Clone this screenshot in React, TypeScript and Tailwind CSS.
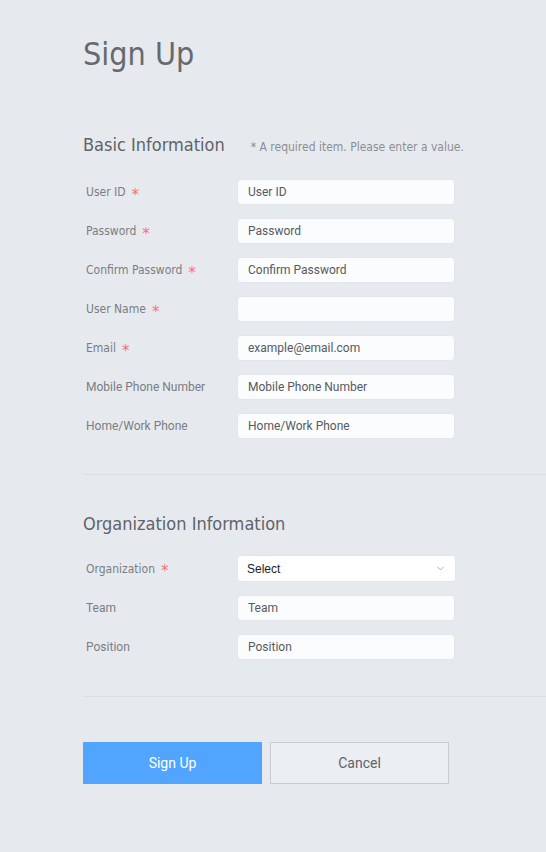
import { ChevronDown } from 'lucide-react';

const TAHOMA = 'font-["DejaVu_Sans_Condensed","DejaVu_Sans",sans-serif]';

type Field = {
  label: string;
  placeholder: string;
  required?: boolean;
  roboto?: boolean;
};

const basicFields: Field[] = [
  { label: 'User ID', placeholder: 'User ID', required: true },
  { label: 'Password', placeholder: 'Password', required: true },
  { label: 'Confirm Password', placeholder: 'Confirm Password', required: true },
  { label: 'User Name', placeholder: '', required: true },
  { label: 'Email', placeholder: 'example@email.com', required: true },
  { label: 'Mobile Phone Number', placeholder: 'Mobile Phone Number', roboto: true },
  { label: 'Home/Work Phone', placeholder: 'Home/Work Phone', roboto: true },
];

function Label({ text, required, roboto }: { text: string; required?: boolean; roboto?: boolean }) {
  return (
    <div
      className={
        'w-[154px] shrink-0 pl-[3px] text-[12px] text-[#7a7d82] flex items-center ' +
        (roboto ? 'font-["Roboto",sans-serif]' : TAHOMA)
      }
    >
      <span>{text}</span>
      {required && (
        <span className="ml-[6px] text-[#f4727a] text-[15px] leading-none translate-y-[3px] font-['DejaVu_Sans',sans-serif]">
          *
        </span>
      )}
    </div>
  );
}

function TextRow({ field }: { field: Field }) {
  return (
    <div className="flex items-center h-[26px]">
      <Label text={field.label} required={field.required} roboto={field.roboto} />
      <input
        readOnly
        placeholder={field.placeholder}
        className="w-[218px] h-[26px] rounded-[4px] border border-[#e2e6ea] bg-[#fbfcfd] px-[10px] text-[12px] font-['Roboto',sans-serif] placeholder:text-[#555a60] outline-none"
      />
    </div>
  );
}

export default function App() {
  return (
    <div className="min-h-[852px] w-[546px] bg-[#e6eaee] pl-[83px] pt-[34px] overflow-hidden">
      <h1 className={`${TAHOMA} text-[32px] leading-[40px] text-[#66696e]`}>Sign Up</h1>

      <div className="mt-[59px] flex items-baseline">
        <h2 className={`${TAHOMA} text-[18px] leading-[24px] text-[#5f6368]`}>Basic Information</h2>
        <span className={`${TAHOMA} ml-[26px] text-[12px] text-[#8b8e92]`}>
          * A required item. Please enter a value.
        </span>
      </div>

      <div className="mt-[22px] flex flex-col gap-[13px]">
        {basicFields.map((f) => (
          <TextRow key={f.label} field={f} />
        ))}
      </div>

      <div className="mt-[35px] h-px bg-[#dadee2]" />

      <h2 className={`${TAHOMA} mt-[37px] text-[18px] leading-[24px] text-[#5f6368]`}>
        Organization Information
      </h2>

      <div className="mt-[19px] flex flex-col gap-[13px]">
        <div className="flex items-center h-[27px]">
          <Label text="Organization" required />
          <div className="w-[219px] h-[27px] rounded-[4px] border border-[#e2e6ea] bg-white px-[9px] flex items-center justify-between">
            <span className="text-[12px] font-['Liberation_Sans',sans-serif] text-[#222]">Select</span>
            <ChevronDown size={11} strokeWidth={1.5} className="text-[#888]" />
          </div>
        </div>
        <TextRow field={{ label: 'Team', placeholder: 'Team', roboto: true }} />
        <TextRow field={{ label: 'Position', placeholder: 'Position', roboto: true }} />
      </div>

      <div className="mt-[36px] h-px bg-[#dadee2]" />

      <div className="mt-[45px] flex gap-[8px] font-['Roboto',sans-serif] text-[14px]">
        <button className="w-[179px] h-[42px] bg-[#52a5ff] text-white">Sign Up</button>
        <button className="w-[179px] h-[42px] bg-[#ebeef2] border border-[#c8ccd1] text-[#5f6368]">
          Cancel
        </button>
      </div>
    </div>
  );
}
